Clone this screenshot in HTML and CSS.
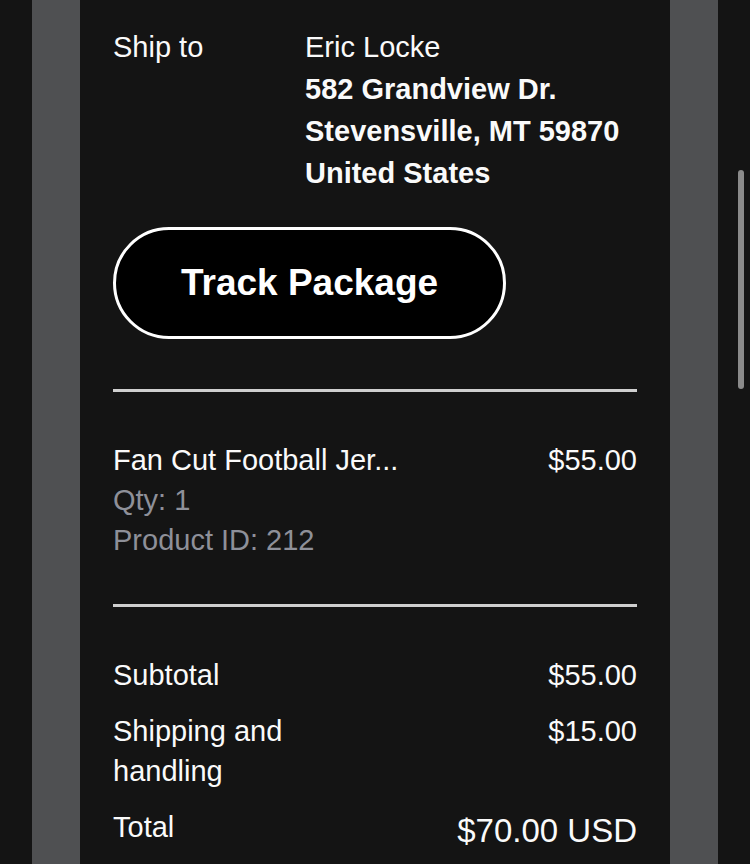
FILE: index.html
```html
<!DOCTYPE html>
<html lang="en">
<head>
    <meta charset="UTF-8">
    <meta name="viewport" content="width=device-width, initial-scale=1.0">
    <title>Order Details</title>
    <link rel="stylesheet" href="styles.css">
</head>
<body>

<div class="page">
    <div class="frame">
        <div class="panel">
            <div class="ship">
                <div class="ship-label">Ship to</div>
                <div class="ship-address">
                    <div>Eric Locke</div>
                    <div class="bold">582 Grandview Dr.</div>
                    <div class="bold">Stevensville, MT 59870</div>
                    <div class="bold">United States</div>
                </div>
            </div>

            <button class="track">Track Package</button>

            <hr class="divider">

            <div class="item">
                <div class="item-info">
                    <div>Fan Cut Football Jer...</div>
                    <div class="muted">Qty: 1</div>
                    <div class="muted">Product ID: 212</div>
                </div>
                <div class="price">$55.00</div>
            </div>

            <hr class="divider">

            <div class="totals">
                <div class="row">
                    <div class="label">Subtotal</div>
                    <div class="price">$55.00</div>
                </div>
                <div class="row">
                    <div class="label">Shipping and handling</div>
                    <div class="price">$15.00</div>
                </div>
                <div class="row">
                    <div class="label">Total</div>
                    <div class="price grand">$70.00 USD</div>
                </div>
            </div>
        </div>
    </div>
</div>

<div class="scrollbar"></div>

</body>
</html>
```

FILE: styles.css
```css
body {
    margin: 0;
    background-color: #141414;
    font-family: 'Liberation Sans', Arial, sans-serif;
    color: #fafafa;
    height: 864px;
    overflow: hidden;
}
.page {
    padding: 0 32px;
}
.frame {
    background: #4f5052;
    padding: 0 48px;
}
.panel {
    background: #141414;
    padding: 26px 33px 40px;
    font-size: 29px;
    line-height: 40px;
}
.ship {
    display: flex;
}
.ship-label {
    width: 192px;
    line-height: 42px;
}
.ship-address {
    line-height: 42px;
}
.bold {
    font-weight: bold;
}
.track {
    display: block;
    margin-top: 33px;
    width: 393px;
    height: 112px;
    background: #000;
    color: #fff;
    border: 3px solid #fff;
    border-radius: 56px;
    font-family: inherit;
    font-size: 37px;
    font-weight: bold;
    padding: 0;
    cursor: pointer;
}
.divider {
    border: none;
    height: 3px;
    background: #cfcfcf;
    margin: 50px 0 48px;
}
.item {
    display: flex;
    justify-content: space-between;
}
.muted {
    color: #8e9099;
}
.item + .divider {
    margin-top: 44px;
}
.totals {
    display: flex;
    flex-direction: column;
    gap: 16px;
}
.row {
    display: flex;
}
.label {
    flex: 1;
}
.row .price {
    flex: 1;
    text-align: right;
}
.grand {
    font-size: 33px;
    padding-top: 4px;
}
.scrollbar {
    position: fixed;
    left: 738px;
    top: 170px;
    width: 6px;
    height: 219px;
    border-radius: 3px;
    background: #8a8a8a;
}
```
